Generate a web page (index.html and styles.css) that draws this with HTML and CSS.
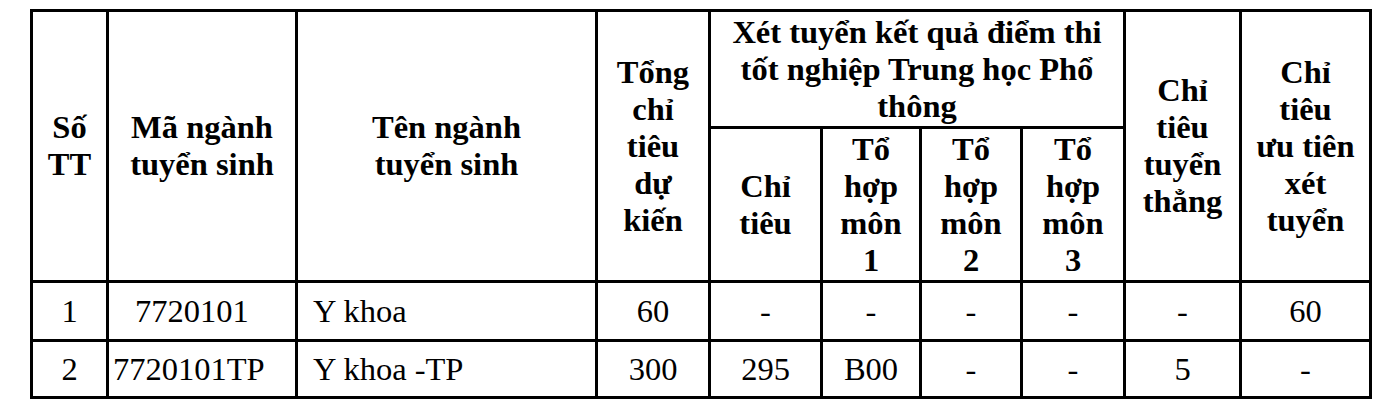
FILE: index.html
```html
<!DOCTYPE html>
<html lang="vi">
<head>
<meta charset="utf-8">
<title>Chỉ tiêu tuyển sinh</title>
<link rel="stylesheet" href="styles.css">
</head>
<body>
<table class="quota">
  <colgroup>
    <col class="c-stt">
    <col class="c-ma">
    <col class="c-ten">
    <col class="c-tong">
    <col class="c-chitieu">
    <col class="c-th1">
    <col class="c-th2">
    <col class="c-th3">
    <col class="c-thang">
    <col class="c-uutien">
  </colgroup>
  <thead>
    <tr class="h-top">
      <th rowspan="2">Số<br>TT</th>
      <th rowspan="2">Mã ngành<br>tuyển sinh</th>
      <th rowspan="2">Tên ngành<br>tuyển sinh</th>
      <th rowspan="2">Tổng<br>chỉ<br>tiêu<br>dự<br>kiến</th>
      <th colspan="4">Xét tuyển kết quả điểm thi<br>tốt nghiệp Trung học Phổ<br>thông</th>
      <th rowspan="2">Chỉ<br>tiêu<br>tuyển<br>thẳng</th>
      <th rowspan="2">Chỉ<br>tiêu<br>ưu tiên<br>xét<br>tuyển</th>
    </tr>
    <tr class="h-sub">
      <th>Chỉ<br>tiêu</th>
      <th>Tổ<br>hợp<br>môn<br>1</th>
      <th>Tổ<br>hợp<br>môn<br>2</th>
      <th>Tổ<br>hợp<br>môn<br>3</th>
    </tr>
  </thead>
  <tbody>
    <tr class="r1">
      <td>1</td>
      <td class="code code-indent">7720101</td>
      <td class="name">Y khoa</td>
      <td>60</td>
      <td>-</td>
      <td>-</td>
      <td>-</td>
      <td>-</td>
      <td>-</td>
      <td>60</td>
    </tr>
    <tr class="r2">
      <td>2</td>
      <td class="code">7720101TP</td>
      <td class="name">Y khoa -TP</td>
      <td>300</td>
      <td>295</td>
      <td>B00</td>
      <td>-</td>
      <td>-</td>
      <td>5</td>
      <td>-</td>
    </tr>
  </tbody>
</table>
</body>
</html>
```
FILE: styles.css
```css
html, body {
  background: #ffffff;
}
body {
  margin: 0;
  padding: 9px 24px 0 30px;
  font-family: "Liberation Serif", "Times New Roman", serif;
  color: #000000;
}
.quota {
  border-collapse: collapse;
  table-layout: fixed;
  width: 1342px;
  font-size: 32.5px;
  line-height: normal;
}
.quota th,
.quota td {
  border: 3px solid #000000;
  padding: 0 4px;
  text-align: center;
  vertical-align: middle;
  overflow: hidden;
  white-space: nowrap;
}
.quota th {
  font-weight: bold;
}
.quota td {
  font-weight: normal;
}
.c-stt { width: 76px; }
.c-ma { width: 189px; }
.c-ten { width: 300px; }
.c-tong { width: 113px; }
.c-chitieu { width: 112px; }
.c-th1 { width: 99px; }
.c-th2 { width: 101px; }
.c-th3 { width: 103px; }
.c-thang { width: 116px; }
.c-uutien { width: 130px; }
.h-top th { height: 114px; }
.h-sub th { height: 151px; }
.r1 td { height: 56px; }
.r2 td { height: 54px; }
.quota td.code {
  text-align: left;
  padding-left: 4px;
}
.quota td.code-indent {
  padding-left: 26px;
}
.quota td.name {
  text-align: left;
  padding-left: 15px;
}
```
